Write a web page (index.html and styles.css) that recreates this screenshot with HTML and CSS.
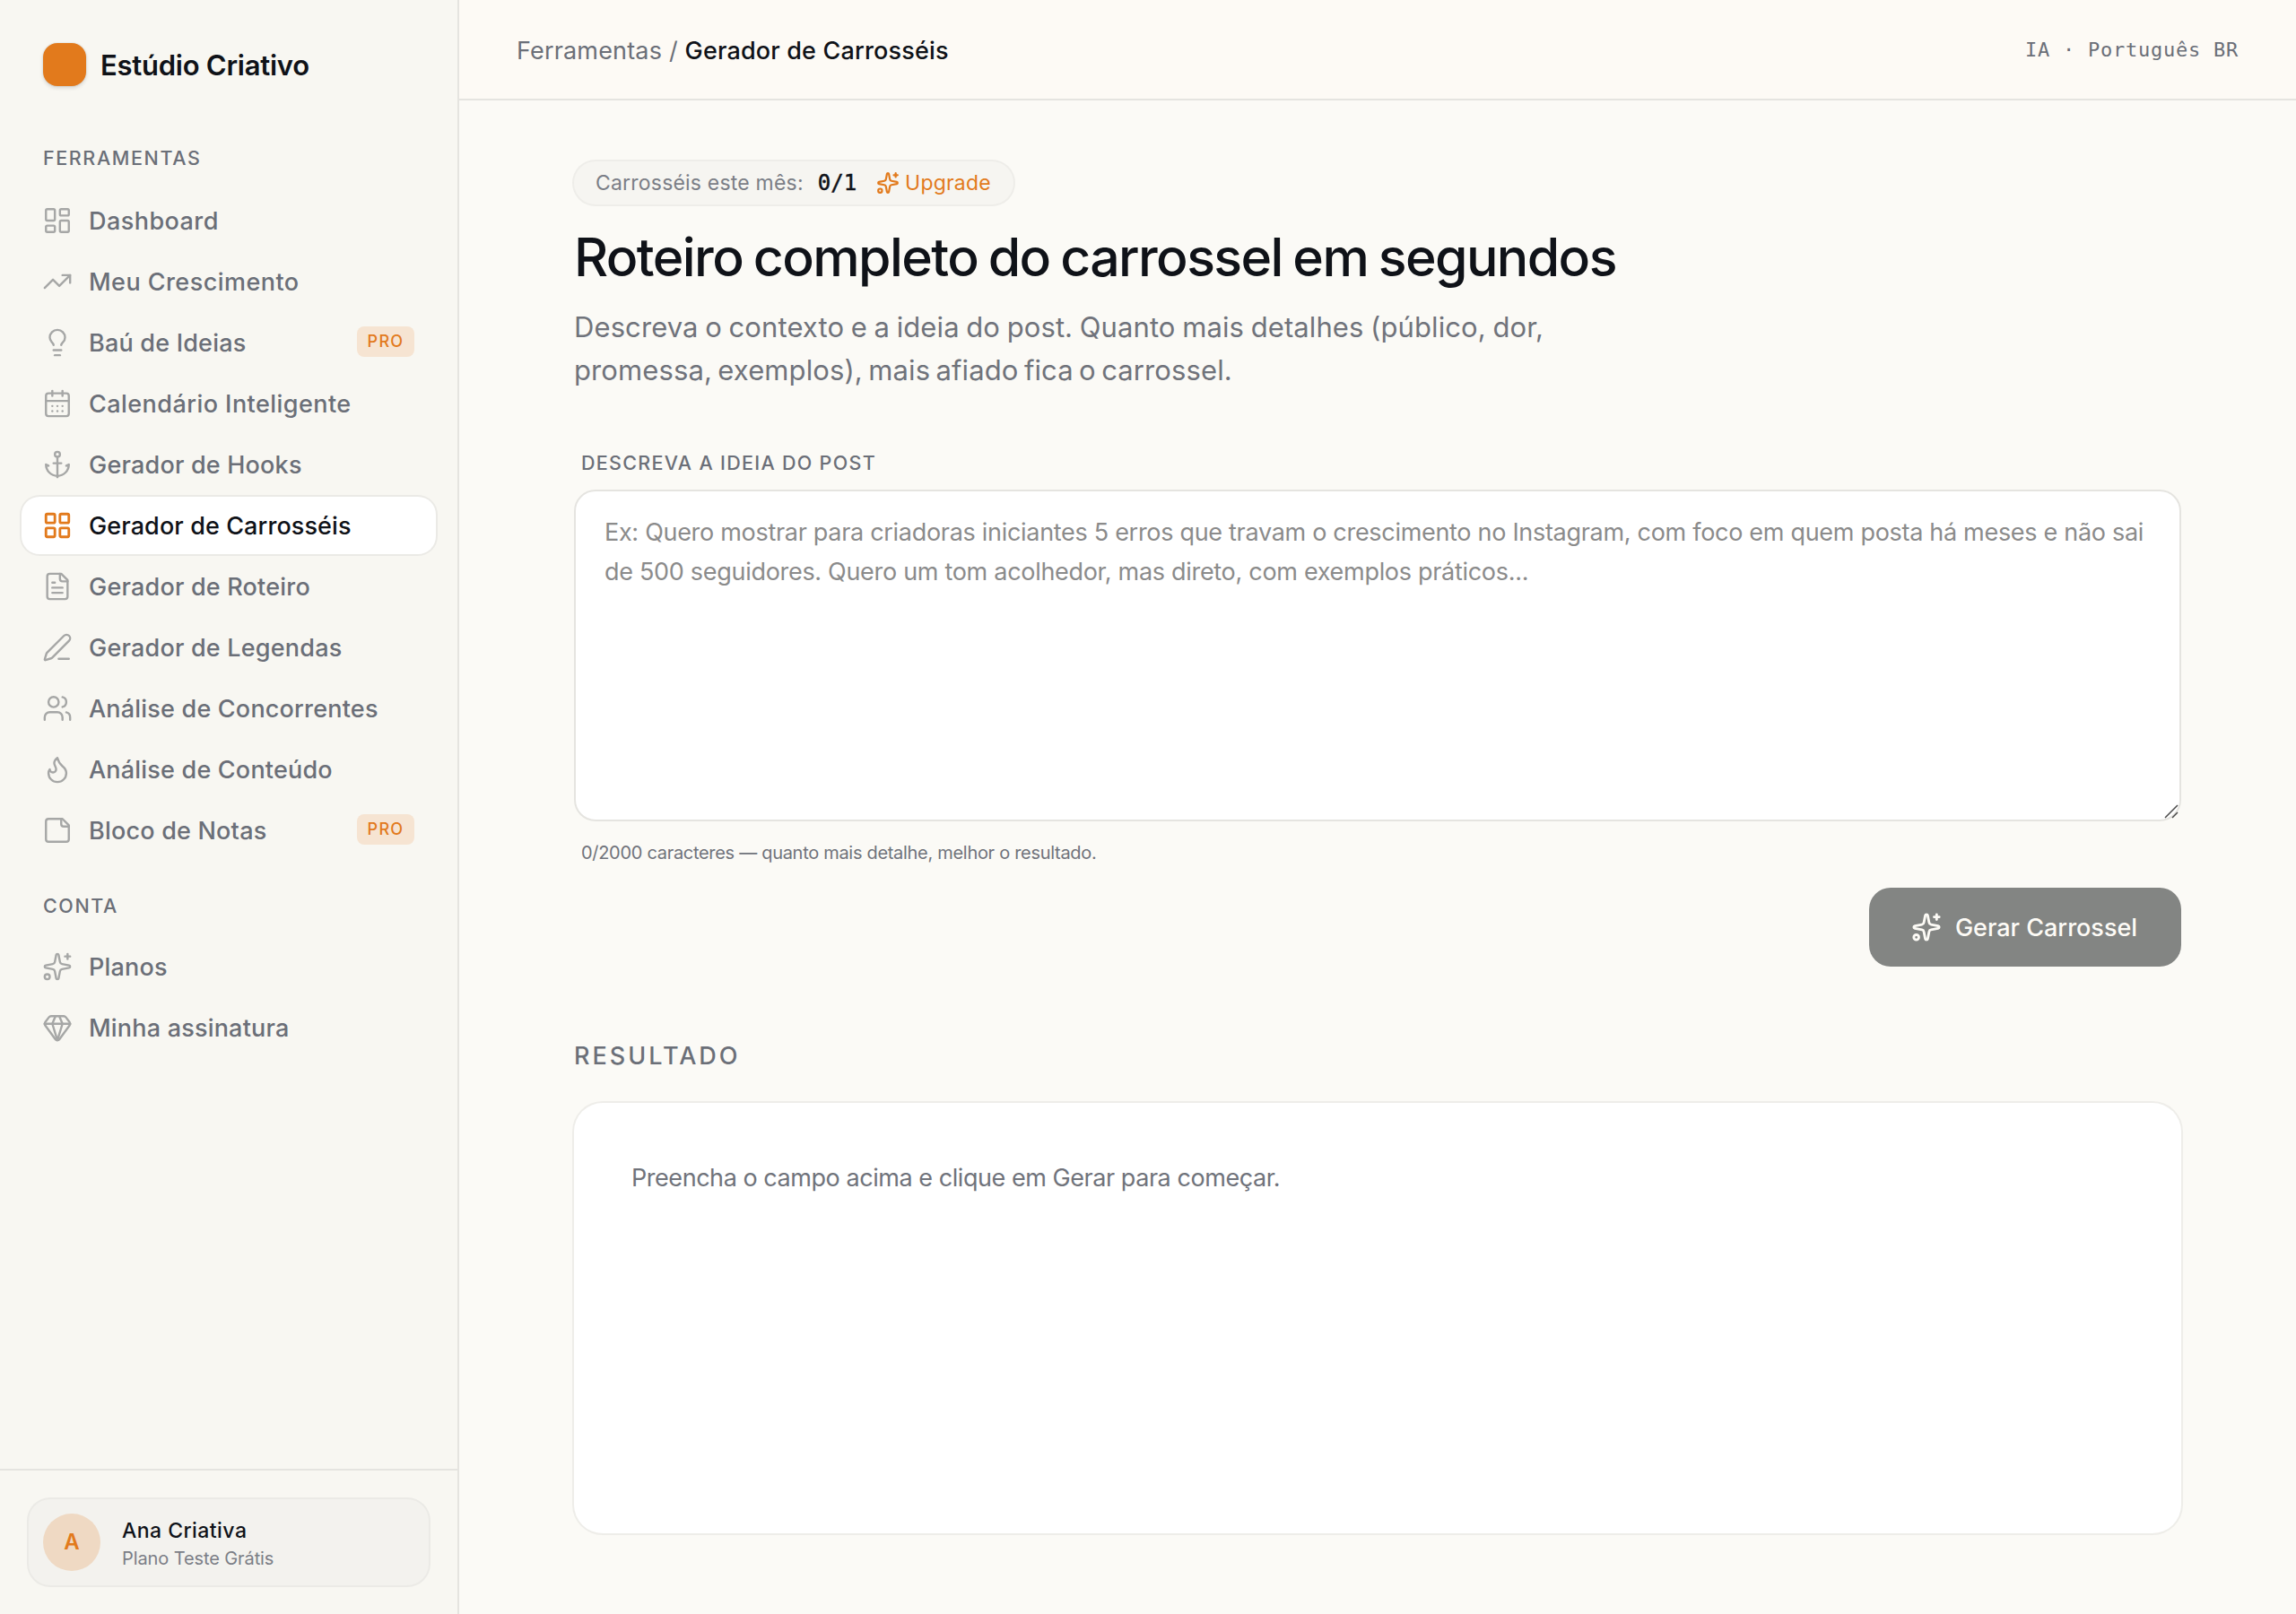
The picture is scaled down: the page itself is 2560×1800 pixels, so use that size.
FILE: index.html
```
<!DOCTYPE html>
<html lang="pt-BR">
<head>
    <meta charset="UTF-8">
    <title>Gerador de Carrosséis</title>
    <link rel="stylesheet" href="styles.css">
</head>
<body>
<svg class="sprite">
    <symbol id="i-dashboard" viewBox="0 0 24 24"><rect width="7" height="9" x="3" y="3" rx="1"/><rect width="7" height="5" x="14" y="3" rx="1"/><rect width="7" height="9" x="14" y="12" rx="1"/><rect width="7" height="5" x="3" y="16" rx="1"/></symbol>
    <symbol id="i-trend" viewBox="0 0 24 24"><path d="M16 7h6v6"/><path d="m22 7-8.5 8.5-5-5L2 17"/></symbol>
    <symbol id="i-bulb" viewBox="0 0 24 24"><path d="M15 14c.2-1 .7-1.7 1.5-2.5 1-.9 1.5-2.2 1.5-3.5A6 6 0 0 0 6 8c0 1 .2 2.2 1.5 3.5.7.7 1.3 1.5 1.5 2.5"/><path d="M9 18h6"/><path d="M10 22h4"/></symbol>
    <symbol id="i-calendar" viewBox="0 0 24 24"><path d="M8 2v4"/><path d="M16 2v4"/><rect width="18" height="18" x="3" y="4" rx="2"/><path d="M3 10h18"/><path d="M8 14h.01"/><path d="M12 14h.01"/><path d="M16 14h.01"/><path d="M8 18h.01"/><path d="M12 18h.01"/><path d="M16 18h.01"/></symbol>
    <symbol id="i-anchor" viewBox="0 0 24 24"><path d="M12 6v16"/><path d="m19 13 2-1a9 9 0 0 1-18 0l2 1"/><path d="M9 11h6"/><circle cx="12" cy="4" r="2"/></symbol>
    <symbol id="i-grid" viewBox="0 0 24 24"><rect width="7" height="7" x="3" y="3" rx="1"/><rect width="7" height="7" x="14" y="3" rx="1"/><rect width="7" height="7" x="14" y="14" rx="1"/><rect width="7" height="7" x="3" y="14" rx="1"/></symbol>
    <symbol id="i-file" viewBox="0 0 24 24"><path d="M15 2H6a2 2 0 0 0-2 2v16a2 2 0 0 0 2 2h12a2 2 0 0 0 2-2V7Z"/><path d="M14 2v4a2 2 0 0 0 2 2h4"/><path d="M10 9H8"/><path d="M16 13H8"/><path d="M16 17H8"/></symbol>
    <symbol id="i-pen" viewBox="0 0 24 24"><path d="M13 21h8"/><path d="M21.174 6.812a1 1 0 0 0-3.986-3.987L3.842 16.174a2 2 0 0 0-.5.83l-1.321 4.352a.5.5 0 0 0 .623.622l4.353-1.32a2 2 0 0 0 .83-.497z"/></symbol>
    <symbol id="i-users" viewBox="0 0 24 24"><path d="M16 21v-2a4 4 0 0 0-4-4H6a4 4 0 0 0-4 4v2"/><path d="M16 3.128a4 4 0 0 1 0 7.744"/><path d="M22 21v-2a4 4 0 0 0-3-3.87"/><circle cx="9" cy="7" r="4"/></symbol>
    <symbol id="i-flame" viewBox="0 0 24 24"><path d="M12 3q1 4 4 6.500t3 5.500a1 1 0 0 1-14 0 5 5 0 0 1 1-3 1 1 0 0 0 5 0c0-2-1.500-3-1.500-5q0-2 2.500-4"/></symbol>
    <symbol id="i-note" viewBox="0 0 24 24"><path d="M16 3H5a2 2 0 0 0-2 2v14a2 2 0 0 0 2 2h14a2 2 0 0 0 2-2V8Z"/><path d="M15 3v4a2 2 0 0 0 2 2h4"/></symbol>
    <symbol id="i-sparkles" viewBox="0 0 24 24"><path d="M11.017 2.814a1 1 0 0 1 1.966 0l1.051 5.558a2 2 0 0 0 1.594 1.594l5.558 1.051a1 1 0 0 1 0 1.966l-5.558 1.051a2 2 0 0 0-1.594 1.594l-1.051 5.558a1 1 0 0 1-1.966 0l-1.051-5.558a2 2 0 0 0-1.594-1.594l-5.558-1.051a1 1 0 0 1 0-1.966l5.558-1.051a2 2 0 0 0 1.594-1.594z"/><path d="M20 2v4"/><path d="M22 4h-4"/><circle cx="4" cy="20" r="2"/></symbol>
    <symbol id="i-gem" viewBox="0 0 24 24"><path d="M10.500 3 8 9l4 13 4-13-2.500-6"/><path d="M17 3a2 2 0 0 1 1.600.8l3 4a2 2 0 0 1 .013 2.382l-7.990 10.986a2 2 0 0 1-3.247 0l-7.990-10.986A2 2 0 0 1 2.400 7.800l2.998-3.997A2 2 0 0 1 7 3z"/><path d="M2 9h20"/></symbol>
</svg>
<div class="app">
    <aside class="sidebar">
        <div class="brand">
            <span class="brand-logo"></span>
            <span class="brand-name">Estúdio Criativo</span>
        </div>
        <nav class="nav">
            <div class="nav-title">FERRAMENTAS</div>
            <a class="nav-item wide"><svg class="icon"><use href="#i-dashboard"/></svg><span>Dashboard</span></a>
            <a class="nav-item wide"><svg class="icon"><use href="#i-trend"/></svg><span>Meu Crescimento</span></a>
            <a class="nav-item"><svg class="icon"><use href="#i-bulb"/></svg><span>Baú de Ideias</span><span class="tag">PRO</span></a>
            <a class="nav-item wide"><svg class="icon"><use href="#i-calendar"/></svg><span>Calendário Inteligente</span></a>
            <a class="nav-item"><svg class="icon"><use href="#i-anchor"/></svg><span>Gerador de Hooks</span></a>
            <a class="nav-item active"><svg class="icon"><use href="#i-grid"/></svg><span>Gerador de Carrosséis</span></a>
            <a class="nav-item"><svg class="icon"><use href="#i-file"/></svg><span>Gerador de Roteiro</span></a>
            <a class="nav-item"><svg class="icon"><use href="#i-pen"/></svg><span>Gerador de Legendas</span></a>
            <a class="nav-item"><svg class="icon"><use href="#i-users"/></svg><span>Análise de Concorrentes</span></a>
            <a class="nav-item"><svg class="icon"><use href="#i-flame"/></svg><span>Análise de Conteúdo</span></a>
            <a class="nav-item"><svg class="icon"><use href="#i-note"/></svg><span>Bloco de Notas</span><span class="tag">PRO</span></a>
            <div class="nav-title account">CONTA</div>
            <a class="nav-item"><svg class="icon"><use href="#i-sparkles"/></svg><span>Planos</span></a>
            <a class="nav-item"><svg class="icon"><use href="#i-gem"/></svg><span>Minha assinatura</span></a>
        </nav>
        <div class="sidebar-footer">
            <div class="user">
                <span class="avatar">A</span>
                <div class="user-info">
                    <div class="user-name">Ana Criativa</div>
                    <div class="user-plan">Plano Teste Grátis</div>
                </div>
            </div>
        </div>
    </aside>
    <div class="page">
        <header class="topbar">
            <div class="crumbs">Ferramentas / <b>Gerador de Carrosséis</b></div>
            <div class="locale">IA · Português BR</div>
        </header>
        <main class="content">
            <div class="quota">
                <span class="quota-label">Carrosséis este mês:</span>
                <span class="quota-count">0/1</span>
                <a class="upgrade"><svg class="icon"><use href="#i-sparkles"/></svg><span>Upgrade</span></a>
            </div>
            <h1>Roteiro completo do carrossel em segundos</h1>
            <p class="lead">Descreva o contexto e a ideia do post. Quanto mais detalhes (público, dor,<br><span class="lead-end">promessa, exemplos), mais afiado fica o carrossel.</span></p>
            <label class="field-label" for="idea">DESCREVA A IDEIA DO POST</label>
            <div class="field">
                <textarea id="idea" class="idea" maxlength="2000" placeholder="Ex: Quero mostrar para criadoras iniciantes 5 erros que travam o crescimento no Instagram, com foco em quem posta há meses e não sai de 500 seguidores. Quero um tom acolhedor, mas direto, com exemplos práticos..."></textarea>
                <svg class="grip" viewBox="0 0 16 16"><path d="M1 15 15 1M9 15l6-6"/></svg>
            </div>
            <div class="hint">0/2000 caracteres — quanto mais detalhe, melhor o resultado.</div>
            <button class="generate" disabled><svg class="icon"><use href="#i-sparkles"/></svg><span>Gerar Carrossel</span></button>
            <h2>RESULTADO</h2>
            <section class="result">Preencha o campo acima e clique em Gerar para começar.</section>
        </main>
    </div>
</div>
</body>
</html>
```
FILE: styles.css
```
* {
    box-sizing: border-box;
}
body {
    margin: 0;
    background: #fbfaf6;
    color: #0f1218;
    font-family: Inter, "Liberation Sans", sans-serif;
    font-size: 27px;
}
.sprite {
    display: none;
}
.icon {
    width: 34px;
    height: 34px;
    flex-shrink: 0;
    fill: none;
    stroke: currentColor;
    stroke-width: 1.7;
    stroke-linecap: round;
    stroke-linejoin: round;
}
.app {
    display: flex;
    height: 1800px;
}

/* sidebar */
.sidebar {
    display: flex;
    flex-direction: column;
    width: 512px;
    background: #f8f7f2;
    border-right: 2px solid #e5e4e0;
}
.brand {
    display: flex;
    align-items: center;
    gap: 16px;
    padding: 48px 48px 0;
}
.brand-logo {
    width: 48px;
    height: 48px;
    border-radius: 16px;
    background: #e27a1c;
    box-shadow: 0 2px 4px rgba(15, 18, 24, 0.15), 0 0 0 1px rgba(15, 18, 24, 0.04);
}
.brand-name {
    font-size: 31px;
    font-weight: 600;
    letter-spacing: -0.25px;
}
.nav {
    display: flex;
    flex-direction: column;
    gap: 4px;
    flex: 1;
    padding: 60px 24px 0;
}
.nav-title {
    height: 40px;
    margin-bottom: 14px;
    padding-left: 24px;
    color: #6b6f78;
    font-size: 21.5px;
    font-weight: 500;
    line-height: 40px;
    letter-spacing: 1.6px;
}
.nav-title.account {
    margin-top: 28px;
    margin-bottom: 12px;
}
.nav-item {
    display: flex;
    align-items: center;
    gap: 18px;
    height: 64px;
    padding: 0 24px 0 23px;
    border-radius: 20px;
    color: #6b6f78;
    font-weight: 500;
    letter-spacing: 0.2px;
}
.nav-item.wide {
    letter-spacing: 0.45px;
}
.nav-item .icon {
    color: #a6a7a6;
}
.nav-item.active {
    background: #fff;
    color: #0f1218;
    letter-spacing: 0.1px;
    box-shadow: 0 0 0 2px #ebeae6;
}
.nav-item.active .icon {
    color: #e27a1c;
    stroke-width: 2;
}
.tag {
    width: 64px;
    height: 34px;
    margin: -2px 0 0 auto;
    border-radius: 8px;
    background: #f6e4d2;
    color: #e27a1c;
    font-size: 18px;
    line-height: 33px;
    text-align: center;
    letter-spacing: 1.3px;
}
.sidebar-footer {
    padding: 32px;
    border-top: 2px solid #e5e4e0;
}
.user {
    display: flex;
    align-items: center;
    gap: 24px;
    height: 96px;
    padding: 0 16px;
    border-radius: 24px;
    background: #f3f2ee;
    box-shadow: 0 0 0 2px #ebeae6;
}
.avatar {
    width: 64px;
    height: 64px;
    border-radius: 50%;
    background: #efd9c3;
    color: #e27a1c;
    font-size: 24px;
    font-weight: 600;
    line-height: 64px;
    text-align: center;
}
.user-info {
    padding-top: 3px;
}
.user-name {
    font-size: 23px;
    font-weight: 500;
    line-height: 32px;
    letter-spacing: 0.45px;
}
.user-plan {
    color: #7b7e86;
    font-size: 20px;
    line-height: 30px;
    letter-spacing: -0.1px;
}

/* main column */
.page {
    flex: 1;
}
.topbar {
    display: flex;
    justify-content: space-between;
    align-items: center;
    height: 112px;
    padding: 0 64px;
    border-bottom: 2px solid #e5e4e0;
    background: #fdfaf5;
    color: #6b6f78;
}
.crumbs {
    padding-top: 2px;
    letter-spacing: 0.17px;
}
.crumbs b {
    color: #0f1218;
    font-weight: 500;
}
.locale {
    font-family: "DejaVu Sans Mono", monospace;
    font-size: 22px;
    letter-spacing: 0.75px;
}
.content {
    display: flex;
    flex-direction: column;
    width: 1792px;
    margin-left: 128px;
    padding-top: 68px;
}
.quota {
    display: flex;
    align-items: center;
    align-self: flex-start;
    width: 490px;
    height: 48px;
    padding: 0 24px;
    border-radius: 24px;
    background: #f6f5f1;
    box-shadow: 0 0 0 2px #eeede9;
    color: #7b7e86;
    font-size: 23px;
    letter-spacing: 0.2px;
}
.quota-count {
    margin-left: 16px;
    color: #0f1218;
    font-family: "DejaVu Sans Mono", monospace;
    font-size: 24px;
    letter-spacing: 0;
    -webkit-text-stroke: 0.5px #0f1218;
}
.upgrade {
    display: flex;
    align-items: center;
    gap: 6px;
    margin-left: 22px;
    color: #e27a1c;
}
.upgrade .icon {
    width: 26px;
    height: 26px;
    stroke-width: 2;
}
h1 {
    margin: 21px 0 0;
    font-size: 59px;
    font-weight: 500;
    line-height: 76px;
    letter-spacing: -1.6px;
    word-spacing: -2.6px;
}
.lead {
    margin: 16px 0 0;
    color: #70737b;
    font-size: 31px;
    line-height: 48px;
    letter-spacing: 0.1px;
    word-spacing: -1.2px;
}
.lead-end {
    word-spacing: -2.4px;
}
.field-label {
    margin: 63px 0 0 8px;
    color: #6b6f78;
    font-size: 21.5px;
    font-weight: 500;
    line-height: 32px;
    letter-spacing: 1.3px;
}
.field {
    position: relative;
    height: 370px;
    margin-top: 14px;
}
.idea {
    width: 100%;
    height: 100%;
    padding: 24px 32px;
    border: 2px solid #e5e4e0;
    border-radius: 24px;
    background: #fff;
    font-family: inherit;
    font-size: 27px;
    line-height: 44px;
    letter-spacing: -0.3px;
    resize: none;
}
.idea::placeholder {
    color: #8b8b8b;
}
.grip {
    position: absolute;
    right: 3px;
    bottom: 3px;
    width: 16px;
    height: 16px;
    fill: none;
    stroke: #4a4a4a;
    stroke-width: 1.5;
}
.hint {
    margin: 19px 0 0 8px;
    color: #70737b;
    font-size: 20px;
    line-height: 32px;
    letter-spacing: -0.3px;
}
.generate {
    display: flex;
    align-items: center;
    justify-content: center;
    align-self: flex-end;
    gap: 15px;
    width: 348px;
    height: 88px;
    margin-top: 23px;
    padding: 0 2px 0 0;
    border: none;
    border-radius: 24px;
    background: #838583;
    color: #fdfbf6;
    font-family: inherit;
    font-size: 27px;
    font-weight: 500;
}
.generate .icon {
    stroke-width: 2;
}
h2 {
    margin: 80px 0 0;
    color: #6b6f78;
    font-size: 27px;
    font-weight: 500;
    line-height: 40px;
    letter-spacing: 3px;
}
.result {
    height: 480px;
    margin-top: 32px;
    padding: 62px 64px;
    border-radius: 32px;
    background: #fff;
    box-shadow: 0 0 0 2px #eeede9;
    color: #70737b;
    font-size: 27px;
    line-height: 44px;
    letter-spacing: -0.45px;
}
```
